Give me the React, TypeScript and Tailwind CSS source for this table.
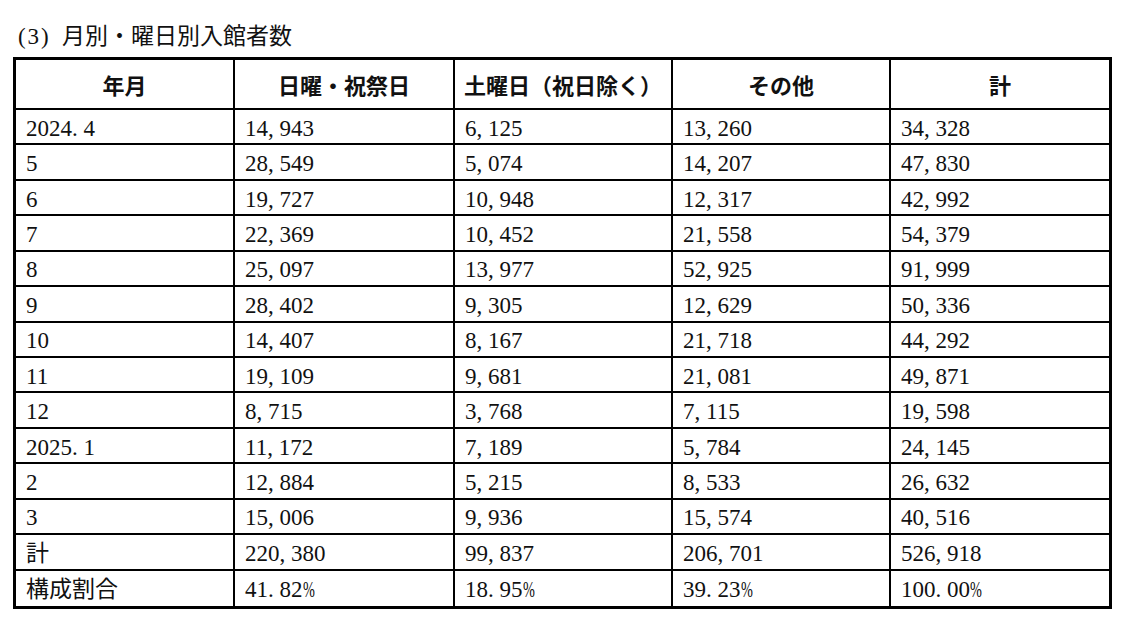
import { ReactNode } from "react";

const rows: string[][] = [
  ["2024.4", "14,943", "6,125", "13,260", "34,328"],
  ["5", "28,549", "5,074", "14,207", "47,830"],
  ["6", "19,727", "10,948", "12,317", "42,992"],
  ["7", "22,369", "10,452", "21,558", "54,379"],
  ["8", "25,097", "13,977", "52,925", "91,999"],
  ["9", "28,402", "9,305", "12,629", "50,336"],
  ["10", "14,407", "8,167", "21,718", "44,292"],
  ["11", "19,109", "9,681", "21,081", "49,871"],
  ["12", "8,715", "3,768", "7,115", "19,598"],
  ["2025.1", "11,172", "7,189", "5,784", "24,145"],
  ["2", "12,884", "5,215", "8,533", "26,632"],
  ["3", "15,006", "9,936", "15,574", "40,516"],
  ["計", "220,380", "99,837", "206,701", "526,918"],
  ["構成割合", "41.82%", "18.95%", "39.23%", "100.00%"],
];

const headers = ["年月", "日曜・祝祭日", "土曜日（祝日除く）", "その他", "計"];

// half-width punctuation gets a full digit slot, like the Mincho font in the source
function Half(props: { text: string }) {
  const out: ReactNode[] = [];
  props.text.split("").forEach(function (ch, i) {
    if (ch === "," || ch === ".") {
      out.push(
        <span key={i} className="inline-block w-[0.5em] text-left">
          {ch}
        </span>
      );
    } else if (ch === "(" || ch === ")" || ch === " ") {
      out.push(
        <span key={i} className="inline-block w-[0.5em] text-center">
          {ch === " " ? "\u00a0" : ch}
        </span>
      );
    } else if (ch === "%") {
      out.push(
        <span key={i} className="inline-block w-[0.5em] overflow-visible">
          <span className="inline-block origin-left scale-x-[0.62]">%</span>
        </span>
      );
    } else {
      out.push(ch);
    }
  });
  return <>{out}</>;
}

export default function App() {
  return (
    <div className="min-h-screen bg-white pl-[13px] pt-[24px] text-[#111]">
      <div
        className="mb-[7px] pl-[3px] text-[23px] leading-[26px]"
        style={{ fontFamily: '"Liberation Serif", "Noto Sans CJK JP", serif' }}
      >
        <Half text="(3) " />
        月別・曜日別入館者数
      </div>
      <div className="grid h-[552px] w-[1099px] grid-cols-[219px_220px_218px_218px_218px] grid-rows-[50px_repeat(14,minmax(0,1fr))] border-[3px] border-black">
        {headers.map(function (h, i) {
          return (
            <div
              key={h}
              className={
                "flex items-center justify-center border-b-2 border-black text-[22px] font-bold " +
                (i < 4 ? "border-r-2" : "")
              }
              style={{ fontFamily: '"Noto Sans CJK JP", sans-serif' }}
            >
              {h}
            </div>
          );
        })}
        {rows.map(function (row, r) {
          return row.map(function (cell, c) {
            const classes = ["flex items-center pl-[10px] pt-[3px] text-[23px] leading-none border-black"];
            if (c < 4) classes.push("border-r-2");
            if (r < rows.length - 1) classes.push("border-b-2");
            return (
              <div
                key={r + "-" + c}
                className={classes.join(" ")}
                style={{ fontFamily: '"Liberation Serif", "Noto Sans CJK JP", serif' }}
              >
                <span>
                  <Half text={cell} />
                </span>
              </div>
            );
          });
        })}
      </div>
    </div>
  );
}
